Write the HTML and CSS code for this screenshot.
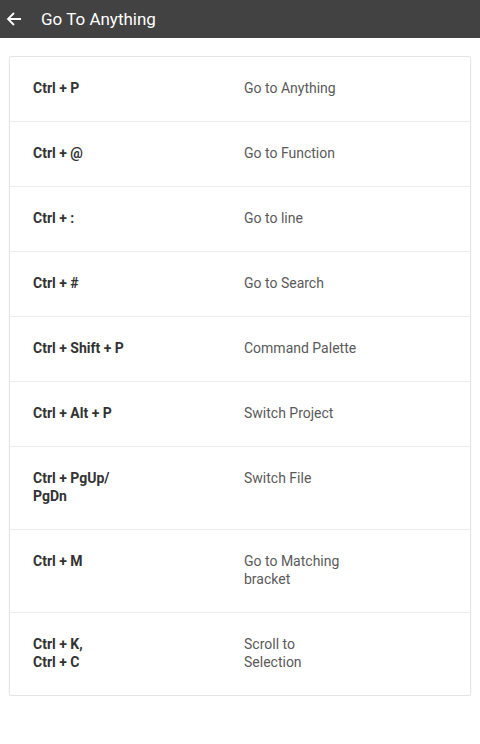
FILE: index.html
```html
<!DOCTYPE html>
<html lang="en">
<head>
  <meta charset="UTF-8">
  <title>Go To Anything</title>
  <link rel="stylesheet" href="styles.css">
</head>
<body>

<!-- top bar -->
<div class="toolbar">
  <svg class="back" width="16" height="16" viewBox="0 0 16 16">
    <path d="M15 8H2M8 2L2 8l6 6" fill="none" stroke="#fff" stroke-width="1.8"/>
  </svg>
  <span class="title">Go To Anything</span>
</div>

<!-- shortcut list -->
<div class="card">
  <div class="row"><div class="keys">Ctrl + P</div><div class="desc">Go to Anything</div></div>
  <div class="row"><div class="keys">Ctrl + @</div><div class="desc">Go to Function</div></div>
  <div class="row"><div class="keys">Ctrl + :</div><div class="desc">Go to line</div></div>
  <div class="row"><div class="keys">Ctrl + #</div><div class="desc">Go to Search</div></div>
  <div class="row"><div class="keys">Ctrl + Shift + P</div><div class="desc">Command Palette</div></div>
  <div class="row"><div class="keys">Ctrl + Alt + P</div><div class="desc">Switch Project</div></div>
  <div class="row"><div class="keys">Ctrl + PgUp/<br>PgDn</div><div class="desc">Switch File</div></div>
  <div class="row"><div class="keys">Ctrl + M</div><div class="desc">Go to Matching<br>bracket</div></div>
  <div class="row"><div class="keys">Ctrl + K,<br>Ctrl + C</div><div class="desc">Scroll to<br>Selection</div></div>
</div>

</body>
</html>
```

FILE: styles.css
```css
body {
  margin: 0;
  background-color: #ffffff;
  font-family: Roboto, "Liberation Sans", sans-serif;
}
.toolbar {
  height: 38px;
  background-color: #424242;
  display: flex;
  align-items: center;
  padding-left: 6px;
}
.back {
  margin-right: 19px;
}
.title {
  color: #ffffff;
  font-size: 17px;
}
.card {
  margin: 18px 9px 0 9px;
  border: 1px solid #e4e4e4;
  border-radius: 2px;
  box-shadow: 0 2px 2px rgba(0, 0, 0, 0.06);
}
.row {
  display: flex;
  padding: 22px 23px 24px 23px;
  border-top: 1px solid #ececec;
  font-size: 14px;
  line-height: 18px;
}
.row:first-child {
  border-top: none;
}
.keys {
  width: 211px;
  font-weight: bold;
  color: #333333;
}
.desc {
  color: #5a5a5a;
}
```
